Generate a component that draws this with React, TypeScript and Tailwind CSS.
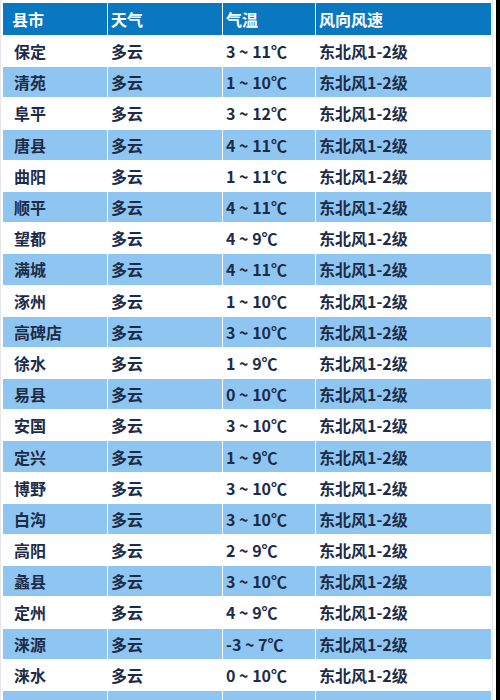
const rows: [string, string, string, string][] = [
  ["保定", "多云", "3 ~ 11℃", "东北风1-2级"],
  ["清苑", "多云", "1 ~ 10℃", "东北风1-2级"],
  ["阜平", "多云", "3 ~ 12℃", "东北风1-2级"],
  ["唐县", "多云", "4 ~ 11℃", "东北风1-2级"],
  ["曲阳", "多云", "1 ~ 11℃", "东北风1-2级"],
  ["顺平", "多云", "4 ~ 11℃", "东北风1-2级"],
  ["望都", "多云", "4 ~ 9℃", "东北风1-2级"],
  ["满城", "多云", "4 ~ 11℃", "东北风1-2级"],
  ["涿州", "多云", "1 ~ 10℃", "东北风1-2级"],
  ["高碑店", "多云", "3 ~ 10℃", "东北风1-2级"],
  ["徐水", "多云", "1 ~ 9℃", "东北风1-2级"],
  ["易县", "多云", "0 ~ 10℃", "东北风1-2级"],
  ["安国", "多云", "3 ~ 10℃", "东北风1-2级"],
  ["定兴", "多云", "1 ~ 9℃", "东北风1-2级"],
  ["博野", "多云", "3 ~ 10℃", "东北风1-2级"],
  ["白沟", "多云", "3 ~ 10℃", "东北风1-2级"],
  ["高阳", "多云", "2 ~ 9℃", "东北风1-2级"],
  ["蠡县", "多云", "3 ~ 10℃", "东北风1-2级"],
  ["定州", "多云", "4 ~ 9℃", "东北风1-2级"],
  ["涞源", "多云", "-3 ~ 7℃", "东北风1-2级"],
  ["涞水", "多云", "0 ~ 10℃", "东北风1-2级"],
  ["", "", "", ""],
];

const cols = "grid grid-cols-[104px_114px_92px_175px] gap-x-px";

export default function App() {
  return (
    <div
      className="flex h-[700px] w-[500px] overflow-hidden bg-white"
      style={{ fontFamily: '"Noto Sans CJK SC", "Noto Sans", sans-serif' }}
    >
      <div className="w-[1px] border-r border-gray-200" />
      <div className="flex flex-col pt-[3px] pl-[2px]">
        <div className={`${cols} h-[32px] shrink-0 text-[16px] font-bold text-white`}>
          <div className="flex items-center bg-[#0a78c0] pl-[9px]">县市</div>
          <div className="flex items-center bg-[#0a78c0] pl-[3px]">天气</div>
          <div className="flex items-center bg-[#0a78c0] pl-[3px]">气温</div>
          <div className="flex items-center bg-[#0a78c0] pl-[3px]">风向风速</div>
        </div>
        {rows.map((r, i) => {
          const bg = i % 2 === 1 ? "bg-[#8fc6f1]" : "bg-white";
          return (
            <div
              key={i}
              className={`${cols} h-[31.2px] shrink-0 border-t border-white text-[16px] font-bold text-[#1c2c48]`}
            >
              <div className={`flex items-center pl-[11px] ${bg}`}>{r[0]}</div>
              <div className={`flex items-center pl-[3px] ${bg}`}>{r[1]}</div>
              <div className={`flex items-center pl-[3px] ${bg}`}>{r[2]}</div>
              <div className={`flex items-center pl-[3px] ${bg}`}>{r[3]}</div>
            </div>
          );
        })}
      </div>
      <div className="ml-[1px] w-[1px] bg-gray-200" />
      <div className="ml-[3px] w-[4px] bg-black" />
    </div>
  );
}
